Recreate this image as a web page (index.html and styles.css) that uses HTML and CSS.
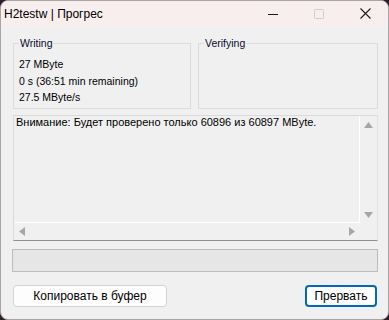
FILE: index.html
```html
<!DOCTYPE html>
<html lang="ru">
<head>
  <meta charset="UTF-8">
  <meta name="viewport" content="width=device-width, initial-scale=1.0">
  <title>H2testw | Прогрес</title>
  <link rel="stylesheet" href="styles.css">
</head>
<body>

  <div class="window">
    <div class="titlebar">
      <span class="title">H2testw | Прогрес</span>
      <div class="controls">
        <span class="ctl">
          <svg width="10" height="10" viewBox="0 0 10 10"><path d="M0 5.5h10" stroke="#1b1b1b" stroke-width="1"/></svg>
        </span>
        <span class="ctl">
          <svg width="10" height="10" viewBox="0 0 10 10"><rect x="0.5" y="0.5" width="9" height="9" rx="1" fill="none" stroke="#d0cccc"/></svg>
        </span>
        <span class="ctl">
          <svg width="11" height="11" viewBox="0 0 11 11"><path d="M0.5 0.5l10 10M10.5 0.5l-10 10" stroke="#1b1b1b" stroke-width="1.1"/></svg>
        </span>
      </div>
    </div>

    <div class="content">
      <div class="groups">
        <fieldset class="group writing">
          <legend>Writing</legend>
          <div class="line">27 MByte</div>
          <div class="line">0 s (36:51 min remaining)</div>
          <div class="line">27.5 MByte/s</div>
        </fieldset>
        <fieldset class="group verifying">
          <legend>Verifying</legend>
        </fieldset>
      </div>

      <div class="log">
        <div class="log-text">Внимание: Будет проверено только 60896 из 60897 MByte.</div>
        <div class="vscroll">
          <svg width="9" height="6" viewBox="0 0 9 6"><path d="M4.5 0L9 6H0z" fill="#a6a6a6"/></svg>
          <svg width="9" height="6" viewBox="0 0 9 6"><path d="M0 0h9L4.5 6z" fill="#a6a6a6"/></svg>
        </div>
        <div class="hscroll">
          <svg width="6" height="9" viewBox="0 0 6 9"><path d="M0 4.5L6 0v9z" fill="#a6a6a6"/></svg>
          <svg width="6" height="9" viewBox="0 0 6 9"><path d="M0 0l6 4.5L0 9z" fill="#a6a6a6"/></svg>
        </div>
        <div class="corner"></div>
      </div>

      <div class="progress"></div>

      <div class="buttons">
        <button type="button" class="btn copy">Копировать в буфер</button>
        <button type="button" class="btn primary">Прервать</button>
      </div>
    </div>
  </div>

</body>
</html>
```

FILE: styles.css
```css
html, body {
  margin: 0;
  height: 100%;
}

body {
  background: #2e1f28;
  font-family: "Liberation Sans", Arial, sans-serif;
  overflow: hidden;
}

.window {
  width: 389px;
  height: 320px;
  box-sizing: border-box;
  border: 1px solid #a9a5a6;
  border-radius: 8px;
  background-color: #f0f0f0;
  overflow: hidden;
  display: flex;
  flex-direction: column;
}

/* title bar */
.titlebar {
  height: 25px;
  flex: none;
  display: flex;
  align-items: center;
  justify-content: space-between;
  background-color: #f8eeee;
}

.title {
  padding-left: 3px;
  font-size: 12px;
  color: #000;
}

.controls {
  display: flex;
  height: 100%;
}

.ctl {
  width: 46px;
  display: flex;
  align-items: center;
  justify-content: center;
}

/* dialog body */
.content {
  flex: 1;
  padding: 11px 10px 0 12px;
  display: flex;
  flex-direction: column;
  font-size: 10.5px;
  color: #000;
}

.groups {
  display: flex;
  gap: 7px;
}

.group {
  margin: 0;
  padding: 7px 5px 0 5px;
  min-width: 0;
  height: 72px;
  box-sizing: border-box;
  border: 1px solid #dcdcdc;
}

.group legend {
  padding: 0 1px;
  line-height: 12px;
  color: #0a0a30;
}

.writing {
  flex: 0 0 178px;
}

.verifying {
  flex: 1;
}

.line {
  line-height: 16.5px;
}

/* read-only log with scroll bars */
.log {
  margin-top: 6px;
  height: 126px;
  box-sizing: border-box;
  border: 1px solid #dadada;
  border-bottom-color: #8f8f8f;
  border-right-color: #e3e3e3;
  display: grid;
  grid-template-columns: 1fr 17px;
  grid-template-rows: 1fr 17px;
}

.log-text {
  padding: 0 2px;
  font-size: 11px;
  line-height: 13px;
  border-right: 1px solid #fff;
  border-bottom: 1px solid #fff;
}

.vscroll {
  display: flex;
  flex-direction: column;
  justify-content: space-between;
  align-items: center;
  padding: 6px 0 5px;
}

.hscroll {
  display: flex;
  justify-content: space-between;
  align-items: center;
  padding: 0 5px;
}

.progress {
  margin: 8px 0 0 -1px;
  height: 23px;
  box-sizing: border-box;
  border: 1px solid #bcbcbc;
  background-color: #e6e6e6;
}

.buttons {
  margin-top: 13px;
  display: flex;
  justify-content: space-between;
  padding-right: 1px;
}

.btn {
  height: 22px;
  box-sizing: border-box;
  border-radius: 4px;
  background-color: #fdfdfd;
  font-family: "Liberation Sans", Arial, sans-serif;
  font-size: 12px;
  color: #000;
  padding: 0;
}

.copy {
  width: 154px;
  border: 1px solid #d3d3d3;
}

.primary {
  width: 72px;
  border: 2px solid #0067c0;
}
```
